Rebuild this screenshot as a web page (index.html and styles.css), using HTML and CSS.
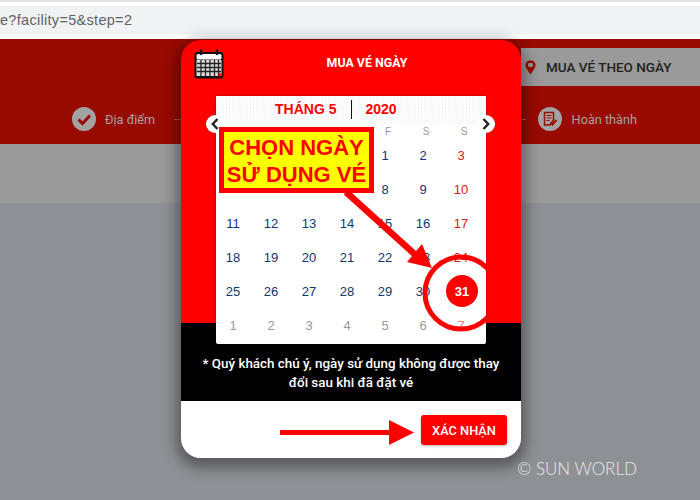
FILE: index.html
```html
<!DOCTYPE html>
<html lang="vi">

<head>
    <meta charset="UTF-8">
    <meta name="viewport" content="width=device-width, initial-scale=1.0">
    <link rel="stylesheet" href="styles.css">
    <title>Mua vé ngày</title>
</head>

<body>
    <div class="browser-top"></div>
    <div class="url-bar">e?facility=5&amp;step=2</div>

    <div class="page">
        <div class="page-head">
            <div class="tab">
                <svg class="tab-pin" width="11" height="15" viewBox="0 0 12 18" preserveAspectRatio="none">
                    <path d="M6 0.5C2.8 0.5 0.5 3 0.5 6C0.5 10 4.5 14.5 6 17.5C7.5 14.5 11.5 10 11.5 6C11.5 3 9.2 0.5 6 0.5ZM6 3.2A2.8 2.8 0 1 1 6 8.8A2.8 2.8 0 1 1 6 3.2Z" fill="#990a00" fill-rule="evenodd" />
                </svg>
                MUA VÉ THEO NGÀY
            </div>
        </div>
        <div class="stepper">
            <div class="step">
                <svg width="24" height="24" viewBox="0 0 24 24">
                    <circle cx="12" cy="12" r="12" fill="#a3a3a3" />
                    <path d="M6.5 12.5L10.5 16.5L18 8.5" fill="none" stroke="#990a00" stroke-width="3" />
                </svg>
                <span>Địa điểm</span>
            </div>
            <div class="step-line"></div>
            <div class="step">
                <svg width="24" height="24" viewBox="0 0 24 24">
                    <circle cx="12" cy="12" r="12" fill="#a3a3a3" />
                    <path d="M6.5 5.5H15.5V13L12 18H6.5Z" fill="none" stroke="#990a00" stroke-width="1.5" />
                    <path d="M8.5 8.5H13.5M8.5 11H13.5M8.5 13.5H11.5" stroke="#990a00" stroke-width="1.2" />
                    <path d="M12.5 15.5L14.5 17.5L18.5 13" fill="none" stroke="#990a00" stroke-width="2" />
                </svg>
                <span>Hoàn thành</span>
            </div>
        </div>
        <div class="page-band"></div>
    </div>

    <div class="modal">
        <div class="modal-top">
            <div class="modal-head">
                <svg class="cal-icon" width="30" height="30" viewBox="0 0 30 30">
                    <rect x="0.5" y="3" width="29" height="26.5" rx="3" fill="#111" />
                    <rect x="2.5" y="5" width="25" height="5.5" rx="1.5" fill="#fff" />
                    <rect x="2.5" y="11" width="25" height="16" fill="#ddd" />
                    <path d="M7 0.5V6M23 0.5V6" stroke="#111" stroke-width="2.4" />
                    <path d="M3 14.5H27M3 18.5H27M3 22.5H27M7 11V27M11.5 11V27M16 11V27M20.5 11V27M24.5 11V27" stroke="#222" stroke-width="1.3" />
                    <circle cx="26" cy="26" r="1.8" fill="#e00" />
                </svg>
                <div class="modal-title">MUA VÉ NGÀY</div>
            </div>
            <div class="calendar">
                <div class="cal-month">
                    <span class="cal-name">THÁNG 5</span>
                    <span class="cal-divider"></span>
                    <span class="cal-year">2020</span>
                </div>
                <div class="cal-nav cal-prev"><svg width="8" height="12" viewBox="0 0 8 12"><path d="M6.5 1L1.8 6L6.5 11" fill="none" stroke="#222" stroke-width="2.4" /></svg></div>
                <div class="cal-nav cal-next"><svg width="8" height="12" viewBox="0 0 8 12"><path d="M1.5 1L6.2 6L1.5 11" fill="none" stroke="#222" stroke-width="2.4" /></svg></div>
                <!-- o trong: phan bi chu thich che -->
                <div class="cal-weekdays">
                    <span></span><span></span><span></span><span></span><span>F</span><span>S</span><span>S</span>
                </div>
                <div class="cal-days">
                    <span></span><span></span><span></span><span></span><span>1</span><span>2</span><span class="sun">3</span>
                    <span></span><span></span><span></span><span></span><span>8</span><span>9</span><span class="sun">10</span>
                    <span>11</span><span>12</span><span>13</span><span>14</span><span>15</span><span>16</span><span class="sun">17</span>
                    <span>18</span><span>19</span><span>20</span><span>21</span><span>22</span><span>23</span><span class="sun">24</span>
                    <span>25</span><span>26</span><span>27</span><span>28</span><span>29</span><span>30</span><span class="picked">31</span>
                    <span class="off">1</span><span class="off">2</span><span class="off">3</span><span class="off">4</span><span class="off">5</span><span class="off">6</span><span class="off-sun">7</span>
                </div>
            </div>
        </div>
        <div class="modal-note">* Quý khách chú ý, ngày sử dụng không được thay<br>đổi sau khi đã đặt vé</div>
        <div class="modal-foot">
            <button class="confirm-btn">XÁC NHẬN</button>
        </div>
    </div>

    <!-- chu thich ve de len anh -->
    <svg class="marks" width="700" height="500" viewBox="0 0 700 500">
        <defs>
            <clipPath id="card-clip">
                <rect x="216" y="96" width="270" height="248" />
            </clipPath>
        </defs>
        <circle cx="461" cy="293" r="36" fill="none" stroke="#f00" stroke-width="5" clip-path="url(#card-clip)" />
        <path d="M346 192L420 259" stroke="#f00" stroke-width="6.5" />
        <polygon points="422,244 407,262 432,268" fill="#f00" />
        <rect x="280" y="430" width="110" height="5" fill="#f00" />
        <polygon points="389,420 389,445 414,432.5" fill="#f00" />
    </svg>
    <div class="callout">CHỌN NGÀY<br>SỬ DỤNG VÉ</div>
    <div class="watermark">© SUN WORLD</div>
</body>

</html>
```

FILE: styles.css
```css
/* General */
html,
body {
    height: 100%;
}

body {
    position: relative;
    width: 700px;
    height: 500px;
    margin: 0;
    overflow: hidden;
    background-color: #8f9095;
    font-family: Roboto, "Liberation Sans", sans-serif;
}

.browser-top {
    height: 6px;
    background: linear-gradient(#e3e3e6 0, #e3e3e6 2px, #fff 2px);
}

.url-bar {
    height: 28px;
    line-height: 28px;
    background-color: #f1f2f4;
    border-bottom: 5px solid #fff;
    color: #606266;
    font-family: "Liberation Sans", sans-serif;
    font-size: 14.5px;
    letter-spacing: 0.3px;
}

/* Trang phia sau */
.page-head {
    display: flex;
    justify-content: flex-end;
    align-items: flex-end;
    height: 47px;
    background-color: #990a00;
}

.tab {
    display: flex;
    align-items: center;
    gap: 10px;
    width: 175px;
    height: 38px;
    padding-left: 4px;
    background-color: #9a9a9a;
    color: #222;
    font-size: 13.5px;
    font-weight: 500;
}

.tab-pin {
    flex: none;
}

.stepper {
    display: flex;
    align-items: center;
    height: 58px;
    box-sizing: border-box;
    padding: 8px 63px 0 72px;
    background-color: #990a00;
}

.step {
    display: flex;
    align-items: center;
    gap: 9px;
    color: #a3a3a3;
    font-size: 12.7px;
}

.step:last-child {
    gap: 10px;
}

.step-line {
    flex: 1;
    height: 1px;
    margin: 0 12px 0 19px;
    background-color: #a85048;
}

.page-band {
    height: 59px;
    background-color: #9a9a9a;
}

/* Modal */
.modal {
    position: absolute;
    left: 181px;
    top: 40px;
    display: flex;
    flex-direction: column;
    width: 340px;
    height: 418px;
    border-radius: 20px;
    box-shadow: 0 5px 14px 5px rgba(0, 0, 0, 0.38);
}

.modal-top {
    height: 283px;
    background-color: #f00;
    border-radius: 20px 20px 0 0;
}

.modal-head {
    position: relative;
    height: 56px;
}

.cal-icon {
    position: absolute;
    left: 13px;
    top: 9px;
}

.modal-title {
    padding-top: 15px;
    padding-left: 32px;
    text-align: center;
    color: #fff;
    font-size: 12.4px;
    font-weight: 700;
}

.calendar {
    position: relative;
    z-index: 1;
    width: 270px;
    height: 248px;
    margin: 0 35px;
    background-color: #fff;
    border-radius: 2px;
    box-shadow: 0 0 2px rgba(0, 0, 0, 0.5);
    font-family: "Liberation Sans", sans-serif;
}

.cal-month {
    display: grid;
    grid-template-columns: 1fr 1px 1fr;
    align-items: center;
    column-gap: 14px;
    height: 28px;
    padding-bottom: 2px;
    box-sizing: border-box;
    background-color: #fff;
    background-image: repeating-conic-gradient(#f7f7f7 0 25%, #fff 0 50%);
    background-size: 3px 3px;
    color: #f00;
    font-size: 14px;
    font-weight: 700;
}

.cal-name {
    justify-self: end;
}

.cal-divider {
    width: 1px;
    height: 19px;
    background-color: #111;
}

.cal-nav {
    position: absolute;
    top: 19px;
    display: flex;
    align-items: center;
    justify-content: center;
    width: 18px;
    height: 18px;
    background-color: #fff;
    border-radius: 50%;
}

.cal-prev {
    left: -10px;
}

.cal-next {
    right: -9px;
}

.cal-weekdays,
.cal-days {
    display: grid;
    grid-template-columns: repeat(7, 38px);
    margin-left: -2px;
    text-align: center;
}

.cal-weekdays {
    height: 14px;
    padding-left: 3px;
    color: #999;
    font-size: 10px;
    line-height: 16px;
}

.cal-days {
    grid-auto-rows: 34px;
    color: #12366f;
    font-size: 13px;
}

.cal-days span {
    display: flex;
    align-items: center;
    justify-content: center;
}

.cal-days .off {
    color: #999;
}

.cal-days .sun {
    color: #e0141c;
}

.cal-days .off-sun {
    color: #f57a7a;
}

.cal-days .picked {
    width: 32px;
    height: 32px;
    margin: 1px 2px 1px 4px;
    background-color: #f00;
    border-radius: 50%;
    color: #fff;
    font-weight: 700;
}

.modal-note {
    height: 78px;
    box-sizing: border-box;
    padding-top: 31px;
    background-color: #000;
    color: #fff;
    font-size: 13.4px;
    font-weight: 500;
    line-height: 19px;
    text-align: center;
}

.modal-foot {
    display: flex;
    justify-content: flex-end;
    flex: 1;
    padding: 14px 14px 0 0;
    background-color: #fff;
    border-radius: 0 0 20px 20px;
}

.confirm-btn {
    width: 86px;
    height: 30px;
    padding: 0;
    border: none;
    border-radius: 3px;
    background-color: #f00;
    box-shadow: 0 1px 3px rgba(0, 0, 0, 0.3);
    color: #fff;
    font-family: Roboto, sans-serif;
    font-size: 12.8px;
    font-weight: 500;
}

/* Chu thich */
.marks {
    position: absolute;
    left: 0;
    top: 0;
    z-index: 2;
}

.callout {
    position: absolute;
    left: 219px;
    top: 127px;
    z-index: 3;
    width: 155px;
    height: 66px;
    box-sizing: border-box;
    padding-top: 2px;
    border: 5px solid #f00;
    background-color: #ff0;
    color: #f00;
    font-family: "Liberation Sans", sans-serif;
    font-size: 22px;
    font-weight: 700;
    line-height: 27px;
    text-align: center;
    white-space: nowrap;
}

.watermark {
    position: absolute;
    left: 517px;
    top: 458px;
    z-index: 3;
    color: #e8e8e8;
    font-family: Lato, sans-serif;
    font-size: 17px;
    font-weight: 300;
}
```
